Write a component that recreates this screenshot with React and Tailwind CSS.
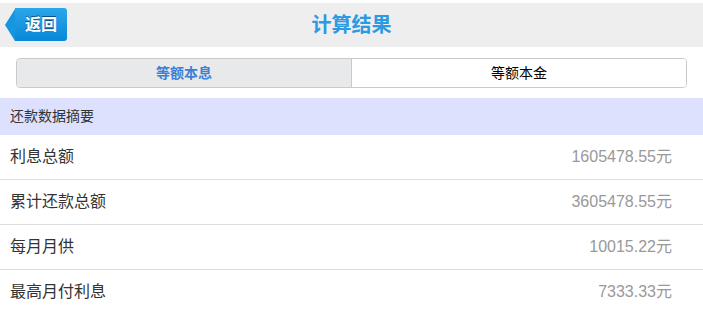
const rows = [
  ["利息总额", "1605478.55元"],
  ["累计还款总额", "3605478.55元"],
  ["每月月供", "10015.22元"],
  ["最高月付利息", "7333.33元"],
];

const cjk = { fontFamily: '"Liberation Sans", "Noto Sans CJK SC", sans-serif' };

export default function App() {
  return (
    <div className="w-[703px] h-[314px] overflow-hidden bg-white pt-[3px]" style={cjk}>
      <div className="relative flex h-[44px] items-center justify-center bg-[#eeeeee]">
        <button className="absolute left-[5px] top-[5px] flex h-[33px] items-center">
          <span className="h-0 w-0 border-y-[16.5px] border-r-[10px] border-y-transparent border-r-[#1596e0]" />
          <span className="flex h-[33px] w-[52px] items-center justify-center rounded-r-[3px] bg-gradient-to-b from-[#2aa6ea] to-[#0688d8] text-[16px] font-bold text-white [text-shadow:0_-1px_0_#0b4f86]">
            返回
          </span>
        </button>
        <h1 className="text-[20px] font-bold text-[#2b9ae2]">计算结果</h1>
      </div>

      <div className="px-[16px] pt-[11px]">
        <div className="flex h-[30px] overflow-hidden rounded-[4px] border border-[#c9c9c9] text-[14px]">
          <div className="flex flex-1 items-center justify-center border-r border-[#c9c9c9] bg-[#e8e9eb] font-bold text-[#3f7fd5]">
            等额本息
          </div>
          <div className="flex flex-1 items-center justify-center bg-white text-black">
            等额本金
          </div>
        </div>
      </div>

      <div className="mt-[10px] flex h-[37px] items-center bg-[#dde1fd] px-[10px] text-[14px] text-[#333]">
        还款数据摘要
      </div>

      {rows.map(([label, value]) => (
        <div
          key={label}
          className="flex h-[45px] items-center justify-between border-b border-[#dddddd] pl-[10px] pr-[31px]"
        >
          <span className="text-[16px] text-[#333]">{label}</span>
          <span className="text-[16px] text-[#999]">{value}</span>
        </div>
      ))}
    </div>
  );
}
